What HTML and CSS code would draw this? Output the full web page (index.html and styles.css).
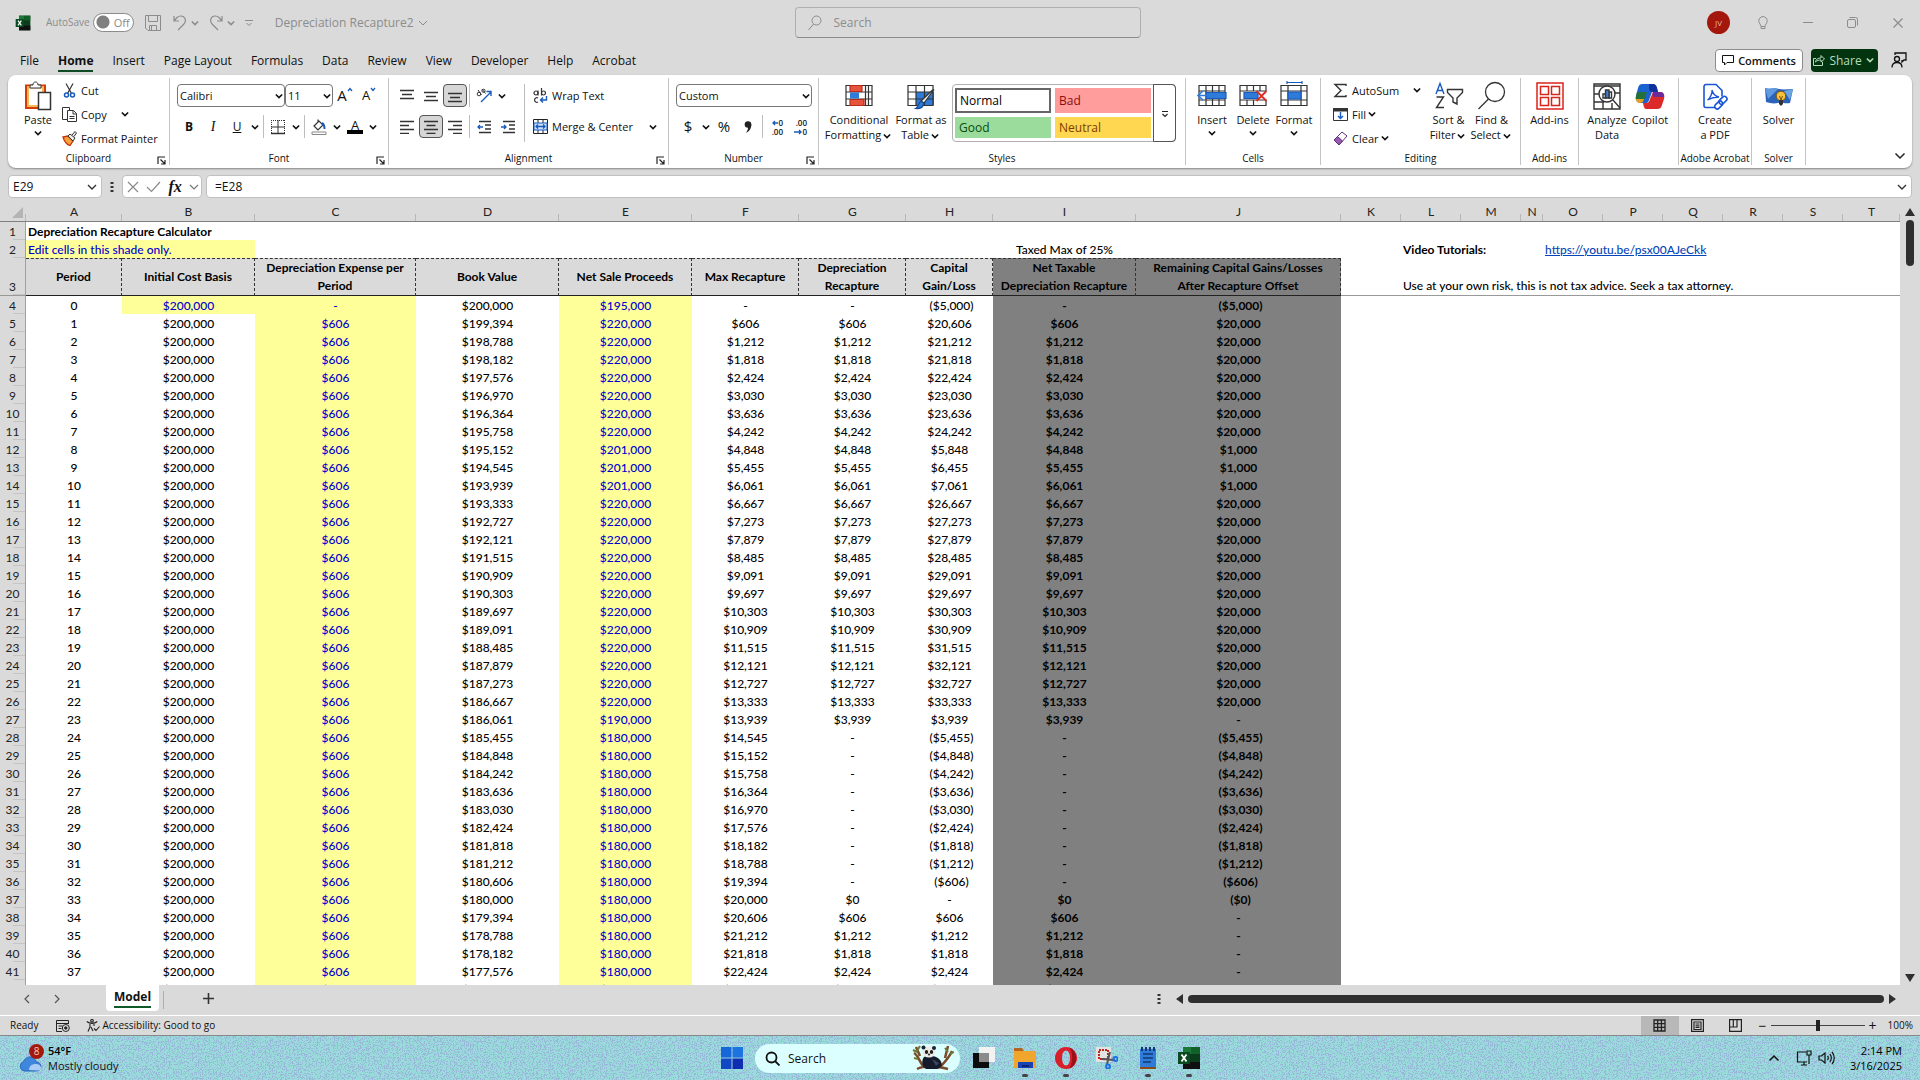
FILE: index.html
```html
<!DOCTYPE html>
<html lang="en">
<head>
    <meta charset="UTF-8">
    <meta name="viewport" content="width=device-width, initial-scale=1.0">
    <title>Depreciation Recapture2 - Excel</title>
    <link rel="stylesheet" href="styles.css">
</head>
<body>
    <!-- shared icons -->
    <svg class="sprite" aria-hidden="true">
        <symbol id="chev" viewBox="0 0 8 8"><path d="M1.5 2.8 4 5.3l2.500-2.500" fill="none" stroke="currentColor" stroke-width="1.300"/></symbol>
        <symbol id="launch" viewBox="0 0 9 9"><path d="M1 8V1h7M3.500 3.500l4 4M8 4v4H4" fill="none" stroke="#222" stroke-width="1.200"/></symbol>
        <symbol id="excel" viewBox="0 0 24 24">
            <path d="M6 1h17v22H6z" fill="#0b3d1c"/><path d="M6 1h8v7H6z" fill="#1b7a3a"/><path d="M14 1h9v7h-9z" fill="#12602a"/><path d="M6 16h17v7H6z" fill="#101010"/>
            <path d="M1 6h12v12H1z" fill="#0a4a20"/><path d="M4.500 8.500l5 7M9.500 8.500l-5 7" stroke="#fff" stroke-width="1.800"/>
        </symbol>
    </svg>

    <header class="titlebar">
        <div class="title-left">
            <svg class="logo" viewBox="0 0 24 24"><use href="#excel"/></svg>
            <label for="autosave">AutoSave</label>
            <span class="switch"><input type="checkbox" id="autosave"><span>Off</span></span>
            <button class="qat" aria-label="Save"><svg width="16" height="16" viewBox="0 0 16 16" fill="none" stroke="currentColor"><path d="M.5.5h15v15H3L.5 13zM3.500.500v6h9v-6M4.500 15.500v-5h7v5M6.500 10.500v5"/></svg></button>
            <button class="qat" aria-label="Undo"><svg width="14" height="16" viewBox="0 0 14 16" fill="none" stroke="currentColor" stroke-width="1.200"><path d="M1 1v5h5M1 6l3-3.500C6.500.200 10.500.500 12 3.500c1 2.500 0 4.500-1.500 6L5 15"/></svg></button>
            <svg class="chev" viewBox="0 0 8 8"><use href="#chev"/></svg>
            <button class="qat" aria-label="Redo"><svg width="14" height="16" viewBox="0 0 14 16" fill="none" stroke="currentColor" stroke-width="1.200"><path d="M13 1v5H8M13 6l-3-3.500C7.500.200 3.500.500 2 3.500c-1 2.500 0 4.500 1.500 6L9 15"/></svg></button>
            <svg class="chev" viewBox="0 0 8 8"><use href="#chev"/></svg>
            <button class="qat" aria-label="Customize"><svg width="8" height="8" viewBox="0 0 8 8" fill="none" stroke="currentColor"><path d="M0 1.500h8M1.500 4 4 6.500 6.500 4"/></svg></button>
            <button class="doc">Depreciation Recapture2<svg width="10" height="8" viewBox="0 0 10 8" fill="none" stroke="currentColor"><path d="M1 2l4 4 4-4"/></svg></button>
        </div>
        <div class="search">
            <svg width="14" height="16" viewBox="0 0 14 16" fill="none" stroke="currentColor"><circle cx="8.500" cy="5.500" r="4.500"/><path d="M5.500 9 .500 15"/></svg>
            <input type="search" placeholder="Search" aria-label="Search">
        </div>
        <div class="title-right">
            <button class="avatar">JV</button>
            <button class="win" aria-label="Tips"><svg width="10" height="14" viewBox="0 0 10 14" fill="none" stroke="currentColor"><path d="M3 10.500C3 8.500.800 7.500.800 4.800a4.200 4.200 0 0 1 8.400 0C9.200 7.500 7 8.500 7 10.500zM3 10.500v2h4v-2"/></svg></button>
            <button class="win" aria-label="Minimize"><svg width="10" height="10" viewBox="0 0 10 10" stroke="currentColor"><path d="M0 4.500h10"/></svg></button>
            <button class="win" aria-label="Restore"><svg width="11" height="11" viewBox="0 0 11 11" fill="none" stroke="currentColor"><rect x=".5" y="2.500" width="8" height="8" rx="1.500"/><path d="M2.500.500H8.500a2 2 0 0 1 2 2v6"/></svg></button>
            <button class="win" aria-label="Close"><svg width="10" height="10" viewBox="0 0 10 10" stroke="currentColor" stroke-width="1.200"><path d="M.5.5l9 9M9.500.500l-9 9"/></svg></button>
        </div>
    </header>

    <nav class="tabs">
        <button>File</button>
        <button class="active">Home</button>
        <button>Insert</button>
        <button>Page Layout</button>
        <button>Formulas</button>
        <button>Data</button>
        <button>Review</button>
        <button>View</button>
        <button>Developer</button>
        <button>Help</button>
        <button>Acrobat</button>
        <div class="tab-actions">
            <button class="comments"><svg width="12" height="12" viewBox="0 0 12 12" fill="none" stroke="currentColor"><path d="M.5 1.500h11v7H5L2.500 11V8.500h-2z"/></svg>Comments</button>
            <button class="share"><svg width="12" height="12" viewBox="0 0 12 12" fill="none" stroke="currentColor"><path d="M3 4.500H.5v7h9V8M2.500 8C3 5 5 4 8 4V1.500L11.500 5 8 8V6C5.500 6 4 6.500 2.500 8z"/></svg>Share<svg class="chev" viewBox="0 0 8 8"><use href="#chev"/></svg></button>
            <button class="presence" aria-label="Presence"><svg width="16" height="16" viewBox="0 0 16 16" fill="none" stroke="currentColor" stroke-width="1.300"><circle cx="6" cy="7" r="2.500"/><path d="M1 15.500c0-3.500 2-5 5-5s5 1.500 5 5M4 3V1h11v7h-2l-2 2V8"/></svg></button>
        </div>
    </nav>

    <section class="ribbon">
        <div class="group g-clipboard">
            <div class="tools">
                <button class="big">
                    <svg width="28" height="30" viewBox="0 0 28 30" fill="none"><path d="M2 4.500h19V27H2z" fill="#fff" stroke="#d83b01" stroke-width="2"/><path d="M4 6.500h15V25H4z" stroke="#f7b955" stroke-width="2"/><path d="M6 7V4h3c0-2 1-3 2.500-3S14 2 14 4h3v3z" fill="#fff" stroke="#333"/><path d="M14.500 11.500h12v17h-12z" fill="#fff" stroke="#333" stroke-width="1.500"/></svg>
                    <span>Paste</span><svg class="chev" viewBox="0 0 8 8"><use href="#chev"/></svg>
                </button>
                <div class="stack">
                    <button class="item"><svg width="15" height="15" viewBox="0 0 15 15" fill="none" stroke="#333" stroke-width="1.200"><path d="M4 .5l5.500 10M11 .5 5.500 10.500"/><g stroke="#185abd" stroke-width="1.500"><circle cx="4.500" cy="12" r="2"/><circle cx="10.500" cy="12" r="2"/></g></svg>Cut</button>
                    <button class="item"><svg width="15" height="15" viewBox="0 0 15 15" fill="#fff" stroke="#333"><path d="M.5.5h7v12h-7z"/><path d="M5.500 3.500h6l3 3v8h-9zM11 3.500V7h3.500M7.500 9.500h5M7.500 11.500h5"/></svg>Copy<svg class="chev far" viewBox="0 0 8 8"><use href="#chev"/></svg></button>
                    <button class="item"><svg width="15" height="15" viewBox="0 0 15 15"><path d="M1 6l5-1 5 5-3 4.500C5 14 2 10 1 6z" fill="#f2a33a" stroke="#c8320a" stroke-width="1.300"/><path d="M6 5l2-2 5 4-2 3zM10 4l3-3.500L14.500 2 12 5.500" fill="#eee" stroke="#333"/></svg>Format Painter</button>
                </div>
            </div>
            <div class="caption">Clipboard<svg class="launch" viewBox="0 0 9 9"><use href="#launch"/></svg></div>
        </div>

        <div class="group g-font">
            <div class="rows">
                <div class="row">
                    <div class="combo w-font"><select aria-label="Font"><option>Calibri</option></select><svg class="chev" viewBox="0 0 8 8"><use href="#chev"/></svg></div>
                    <div class="combo w-size"><select aria-label="Font size"><option>11</option></select><svg class="chev" viewBox="0 0 8 8"><use href="#chev"/></svg></div>
                    <button class="tool grow">A<svg width="6" height="5" viewBox="0 0 6 5" fill="none" stroke="#185abd" stroke-width="1.300"><path d="M1 4l2-2.500L5 4"/></svg></button>
                    <button class="tool shrink">A<svg width="6" height="5" viewBox="0 0 6 5" fill="none" stroke="#185abd" stroke-width="1.300"><path d="M1 1l2 2.500L5 1"/></svg></button>
                </div>
                <div class="row">
                    <button class="tool"><b>B</b></button>
                    <button class="tool"><i>I</i></button>
                    <button class="tool"><u>U</u></button>
                    <svg class="chev" viewBox="0 0 8 8"><use href="#chev"/></svg>
                    <span class="sep"></span>
                    <button class="tool" aria-label="Borders"><svg width="16" height="16" viewBox="0 0 16 16" fill="none" stroke="#333"><path d="M1 1.500h14M1.500 1v13M14.500 1v13" stroke-dasharray="1 1"/><path d="M8 1v14M1 8h14"/><path d="M1 14.500h14" stroke-width="1.500"/></svg></button>
                    <svg class="chev" viewBox="0 0 8 8"><use href="#chev"/></svg>
                    <span class="sep"></span>
                    <button class="tool" aria-label="Fill color"><svg width="16" height="16" viewBox="0 0 16 16" fill="none" stroke="#333" stroke-width="1.200"><path d="M3 7l5-5 4 4-5 5zM7 3V.5"/><path d="M11 4c2 1 2.500 3 2.500 6" stroke="#185abd" stroke-width="2"/><path d="M1 13h14v2.500H1z" fill="#fff" stroke="#888" stroke-width="1"/></svg></button>
                    <svg class="chev" viewBox="0 0 8 8"><use href="#chev"/></svg>
                    <button class="tool fontcolor">A</button>
                    <svg class="chev" viewBox="0 0 8 8"><use href="#chev"/></svg>
                </div>
            </div>
            <div class="caption">Font<svg class="launch" viewBox="0 0 9 9"><use href="#launch"/></svg></div>
        </div>

        <div class="group g-align">
            <div class="tools">
                <div class="rows">
                    <div class="row">
                        <button class="tool" aria-label="Top align"><svg width="14" height="14" viewBox="0 0 14 14" stroke="#333" stroke-width="1.300"><path d="M0 1.500h14M2 5.500h10M0 9.500h14"/></svg></button>
                        <button class="tool" aria-label="Middle align"><svg width="14" height="14" viewBox="0 0 14 14" stroke="#333" stroke-width="1.300"><path d="M0 3.500h14M2 7.500h10M0 11.500h14"/></svg></button>
                        <button class="tool on" aria-label="Bottom align"><svg width="14" height="14" viewBox="0 0 14 14" stroke="#333" stroke-width="1.300"><path d="M0 4.500h14M2 8.500h10M0 12.500h14"/></svg></button>
                        <span class="sep"></span>
                        <button class="tool" aria-label="Orientation"><svg width="16" height="15" viewBox="0 0 16 15" fill="none" stroke="#333"><circle cx="3" cy="6" r="1.800"/><path d="M2 2l3.500 5M6 1l3.500 4.500"/><circle cx="7.500" cy="2.800" r="1.600"/><path d="M5 14 15 4M10.500 3.500H15V8" stroke="#185abd" stroke-width="1.400"/></svg></button>
                        <svg class="chev" viewBox="0 0 8 8"><use href="#chev"/></svg>
                    </div>
                    <div class="row">
                        <button class="tool" aria-label="Align left"><svg width="14" height="14" viewBox="0 0 14 14" stroke="#333" stroke-width="1.300"><path d="M0 1.500h14M0 5.500h9M0 9.500h14M0 13.300h9"/></svg></button>
                        <button class="tool on" aria-label="Center"><svg width="14" height="14" viewBox="0 0 14 14" stroke="#333" stroke-width="1.300"><path d="M0 1.500h14M2.500 5.500h9M0 9.500h14M2.500 13.300h9"/></svg></button>
                        <button class="tool" aria-label="Align right"><svg width="14" height="14" viewBox="0 0 14 14" stroke="#333" stroke-width="1.300"><path d="M0 1.500h14M5 5.500h9M0 9.500h14M5 13.300h9"/></svg></button>
                        <span class="sep"></span>
                        <button class="tool" aria-label="Decrease indent"><svg width="14" height="14" viewBox="0 0 14 14" fill="none" stroke="#333" stroke-width="1.300"><path d="M2 1.500h12M8 5h6M8 9h6M2 12.500h12"/><path d="M6 7H1M3 5 1 7l2 2" stroke="#185abd"/></svg></button>
                        <button class="tool" aria-label="Increase indent"><svg width="14" height="14" viewBox="0 0 14 14" fill="none" stroke="#333" stroke-width="1.300"><path d="M2 1.500h12M8 5h6M8 9h6M2 12.500h12"/><path d="M0 7h5M3 5l2 2-2 2" stroke="#185abd"/></svg></button>
                    </div>
                </div>
                <span class="sep tall"></span>
                <div class="rows">
                    <button class="item row"><svg width="15" height="16" viewBox="0 0 15 16" fill="none" stroke="#333" stroke-width="1.200"><circle cx="3" cy="5" r="2"/><path d="M5 2.500v5M8.500 0v7.500"/><circle cx="10.500" cy="5" r="2"/><path d="M5 10a2.300 2.300 0 1 0 0 4"/><path d="M13.500 8v4H7.500M10 9.500 7.500 12l2.500 2.500" stroke="#185abd" stroke-width="1.400"/></svg>Wrap Text</button>
                    <button class="item row"><svg width="15" height="15" viewBox="0 0 15 15" fill="none" stroke="#222"><path d="M.5.500h14v14H.5zM5 .5V4M10 .5V4M5 11v3.500M10 11v3.500"/><path d="M1 4h13v7H1z" fill="#cfe0f7" stroke="#185abd"/><path d="M3 7.500h9M5 5.500l-2 2 2 2M10 5.500l2 2-2 2" stroke="#185abd" stroke-width="1.300"/></svg>Merge &amp; Center<svg class="chev last" viewBox="0 0 8 8"><use href="#chev"/></svg></button>
                </div>
            </div>
            <div class="caption">Alignment<svg class="launch" viewBox="0 0 9 9"><use href="#launch"/></svg></div>
        </div>

        <div class="group g-number">
            <div class="rows">
                <div class="row">
                    <div class="combo w-number"><select aria-label="Number format"><option>Custom</option></select><svg class="chev" viewBox="0 0 8 8"><use href="#chev"/></svg></div>
                </div>
                <div class="row numbers">
                    <button class="tool">$</button>
                    <svg class="chev" viewBox="0 0 8 8"><use href="#chev"/></svg>
                    <button class="tool">%</button>
                    <button class="tool" aria-label="Comma style"><svg width="8" height="12" viewBox="0 0 8 12" fill="#222"><circle cx="4" cy="3.500" r="3.300"/><path d="M7.300 3.500C7.500 7 5.500 10.500 2 11.800c1.500-2 2.300-3.800 2-6z"/></svg></button>
                    <span class="sep"></span>
                    <button class="tool decimals" aria-label="Increase decimal"><svg width="6" height="6" viewBox="0 0 6 6" fill="none" stroke="#185abd" stroke-width="1.300"><path d="M6 3H1M3 1 1 3l2 2"/></svg>0<br>.00</button>
                    <button class="tool decimals" aria-label="Decrease decimal">.00<br><svg width="8" height="6" viewBox="0 0 8 6" fill="none" stroke="#185abd" stroke-width="1.300"><path d="M0 3h7M5 1l2 2-2 2"/></svg>0</button>
                </div>
            </div>
            <div class="caption">Number<svg class="launch" viewBox="0 0 9 9"><use href="#launch"/></svg></div>
        </div>

        <div class="group g-styles">
            <div class="tools">
                <button class="big wide">
                    <svg width="28" height="30" viewBox="0 0 28 30" fill="none" stroke="#333" stroke-width="1.200"><path d="M1 4.500h26v20H1zM1 11h26M1 18h26M20.500 4.500v20M23.500 4.500v20"/><path d="M5 4.500h12v6H5zM5 18.500h14v6H5z" fill="#e5533d" stroke="#b92a18"/><path d="M5 11.500h9v6H5z" fill="#2f7bd9" stroke="none"/></svg>
                    <span>Conditional<br>Formatting <svg class="chev" viewBox="0 0 8 8"><use href="#chev"/></svg></span>
                </button>
                <button class="big wide">
                    <svg width="28" height="30" viewBox="0 0 28 30" fill="none" stroke="#333" stroke-width="1.200"><path d="M9 11h18v13H9z" fill="#2f7bd9" stroke="none"/><path d="M1 4.500h25v20H1zM1 11h25M1 18h25M9 4.500v20M17.500 4.500v20"/><path d="M27 8.500 17 22l-3-2L25 9.500z" fill="#eee"/><path d="M14 20l3 2.500c-1 4-4 5.500-8.500 5 3-1.500 2.500-5 5.500-7.500z" fill="#2f7bd9" stroke="#174e91"/></svg>
                    <span>Format as<br>Table <svg class="chev" viewBox="0 0 8 8"><use href="#chev"/></svg></span>
                </button>
                <div class="gallery">
                    <div class="swatches">
                        <button class="normal">Normal</button>
                        <button class="bad">Bad</button>
                        <button class="good">Good</button>
                        <button class="neutral">Neutral</button>
                    </div>
                    <button class="more" aria-label="More styles"><svg width="8" height="8" viewBox="0 0 8 8" fill="none" stroke="#222" stroke-width="1.200"><path d="M1 1.500h6M1.500 4 4 6.500 6.500 4"/></svg></button>
                </div>
            </div>
            <div class="caption">Styles</div>
        </div>

        <div class="group g-cells">
            <div class="tools">
                <button class="big cell">
                    <svg width="30" height="30" viewBox="0 0 30 30" fill="none" stroke="#333" stroke-width="1.200"><path d="M2 4.500h26v20H2zM2 10h26M2 19h26M9 4.500v20M15.500 4.500v20M22 4.500v20"/><path d="M9 11.500h20v6H9z" fill="#2f7bd9" stroke="#185abd"/><path d="M16 14.500H1M6 10l-5 4.500L6 19" stroke="#2f7bd9" stroke-width="1.600"/></svg>
                    <span>Insert</span><svg class="chev" viewBox="0 0 8 8"><use href="#chev"/></svg>
                </button>
                <button class="big cell">
                    <svg width="30" height="30" viewBox="0 0 30 30" fill="none" stroke="#333" stroke-width="1.200"><path d="M28 10V4.500H2V10h26M2 24.500h26V19H2zM9 4.500V10M15.500 4.500V10M22 4.500V10M9 19v5.500M15.500 19v5.500M2 10v9"/><path d="M6 11.500h14v6H6z" fill="#2f7bd9" stroke="#185abd"/><path d="M18.500 10l10 10M28.500 10l-10 10" stroke="#e02b20" stroke-width="1.800"/></svg>
                    <span>Delete</span><svg class="chev" viewBox="0 0 8 8"><use href="#chev"/></svg>
                </button>
                <button class="big cell">
                    <svg width="30" height="30" viewBox="0 0 30 30" fill="none" stroke="#333" stroke-width="1.200"><path d="M2 4.500h26v20H2zM2 10h26M2 19h26M9 4.500v20M22 4.500v20"/><path d="M9 11h13v7H9z" fill="#2f7bd9" stroke="#185abd"/><path d="M8 1.500h15M8 0v3M23 0v3" stroke="#185abd"/></svg>
                    <span>Format</span><svg class="chev" viewBox="0 0 8 8"><use href="#chev"/></svg>
                </button>
            </div>
            <div class="caption">Cells</div>
        </div>

        <div class="group g-editing">
            <div class="tools">
                <div class="stack">
                    <button class="item"><svg width="15" height="15" viewBox="0 0 15 15" fill="none" stroke="#333" stroke-width="1.400"><path d="M13 3V1.500H2l6 6-6 6h11V12"/></svg>AutoSum<svg class="chev far" viewBox="0 0 8 8"><use href="#chev"/></svg></button>
                    <button class="item"><svg width="15" height="15" viewBox="0 0 15 15" fill="none" stroke="#333"><path d="M.5 1.500h14v12H.5z"/><path d="M.5 1.500h14V4H.5z" fill="#333"/><path d="M7.500 5v6M5 9l2.500 2.500L10 9" stroke="#185abd" stroke-width="1.400"/></svg>Fill<svg class="chev near" viewBox="0 0 8 8"><use href="#chev"/></svg></button>
                    <button class="item"><svg width="15" height="15" viewBox="0 0 15 15" stroke="#5c2d7a"><path d="M1 9 9 1l5 4-8 9z" fill="#fff"/><path d="M1 9l3.500-3.500 5 4.500L6 14z" fill="#9b59b6"/></svg>Clear<svg class="chev near" viewBox="0 0 8 8"><use href="#chev"/></svg></button>
                </div>
                <button class="big edit">
                    <svg width="30" height="30" viewBox="0 0 30 30" fill="none" stroke-width="1.400"><path d="M2 13 6 2.500 10 13M3.500 9.500h5" stroke="#185abd"/><path d="M2.500 16h7l-7 10.500h7.500M13.500 8.500h15v3L23 17v6l-4-2v-4l-5.500-5.500z" stroke="#333"/></svg>
                    <span>Sort &amp;<br>Filter <svg class="chev" viewBox="0 0 8 8"><use href="#chev"/></svg></span>
                </button>
                <button class="big edit">
                    <svg width="30" height="30" viewBox="0 0 30 30" fill="none" stroke="#333" stroke-width="1.300"><circle cx="18" cy="11" r="9.500"/><path d="M11.500 18 1.500 28"/></svg>
                    <span>Find &amp;<br>Select <svg class="chev" viewBox="0 0 8 8"><use href="#chev"/></svg></span>
                </button>
            </div>
            <div class="caption">Editing</div>
        </div>

        <div class="group g-addins">
            <div class="tools">
                <button class="big">
                    <svg width="28" height="30" viewBox="0 0 28 30" fill="#fff" stroke="#d9241a" stroke-width="1.500"><path d="M1 2h26v26H1z"/><path d="M4.500 5.500h8v8h-8zM15.500 5.500h8v8h-8zM4.500 16.500h8v8h-8zM15.500 16.500h8v8h-8z"/></svg>
                    <span>Add-ins</span>
                </button>
            </div>
            <div class="caption">Add-ins</div>
        </div>

        <div class="group g-analyze">
            <div class="tools">
                <button class="big">
                    <svg width="28" height="30" viewBox="0 0 28 30" fill="none" stroke="#333" stroke-width="1.400"><path d="M1 3h26v25H1zM1 5h26M1 13h6M1 21h10M10 21v7M19 22v6M22 12h5"/><circle cx="14" cy="13" r="8" fill="#fff"/><path d="M10 13h2.500v4H10zM16 11h2.500v6H16z"/><path d="M12.500 9H16v8h-3.500z" fill="#3b7dd8"/><path d="M20 19l7 8"/></svg>
                    <span>Analyze<br>Data</span>
                </button>
                <button class="big">
                    <svg width="30" height="30" viewBox="0 0 30 30"><path d="M7 3h11c2 0 3 1 4 4l1 4h-6l-3 8c-1 3-2 3-4 3H6c-4 0-6-3-5-7L3 7c1-3 2-4 4-4z" fill="#1a62d0"/><path d="M14 3h4c2 0 3 1 4 4l1 4h-6c-2 0-3-2-3-4z" fill="#10309c"/><path d="M2 11h10l-3 8H1c-.500-2 0-4 1-8z" fill="#23703a"/><path d="M1 18h8c-1 3-2 4-4 4-3 0-4-2-4-4z" fill="#e8a020"/><path d="M18 11h7c4 0 5 3 4 7l-2 6c-1 3-2 4-5 4H12c-3 0-3-2-4-6h3c2 0 3-1 4-4z" fill="#dc2a2a"/><path d="M18 11h7c3 0 4 2 4 5h-9c-2 0-3-2-2-5z" fill="#6b2a9a"/></svg>
                    <span>Copilot</span>
                </button>
            </div>
        </div>

        <div class="group g-adobe">
            <div class="tools">
                <button class="big">
                    <svg width="28" height="30" viewBox="0 0 28 30" fill="none" stroke="#1a56d6" stroke-width="1.600"><path d="M14 26.500H5a2 2 0 0 1-2-2v-19a2 2 0 0 1 2-2h10l6 6v6"/><path d="M6.500 19c3-2 5-7 4.500-10 1 4 3 6.500 7 7-4 0-8 1-11.500 3z" stroke-width="1.300"/><rect x="13" y="22" width="9" height="5" rx="2.500" transform="rotate(-45 17 24)"/><rect x="18" y="17" width="9" height="5" rx="2.500" transform="rotate(-45 22 20)"/></svg>
                    <span>Create<br>a PDF</span>
                </button>
            </div>
            <div class="caption">Adobe Acrobat</div>
        </div>

        <div class="group g-solver">
            <div class="tools">
                <button class="big">
                    <svg width="30" height="30" viewBox="0 0 30 30"><path d="M1 7c5 2 9-1 14 1 5 1 9 0 14 0l-3 14c-5 1-8-1-12 0-5 1-8 0-12-1z" fill="#2a63b8"/><path d="M1 7c5 2 8-1 13 1L4 18z" fill="#5f9ae0"/><path d="M20 10l9-2-3 11z" fill="#6ba4e2"/><circle cx="17" cy="15" r="4.800" fill="#f7c23c" stroke="#7a5410"/><path d="M15 19h4v4l-2 2-2-2z" fill="#333"/><path d="M15.500 15l1.500 4 1.500-4" fill="none" stroke="#7a5410"/></svg>
                    <span>Solver</span>
                </button>
            </div>
            <div class="caption">Solver</div>
        </div>

        <button class="collapse" aria-label="Collapse ribbon"><svg width="12" height="8" viewBox="0 0 12 8" fill="none" stroke="#222" stroke-width="1.500"><path d="M1.500 1.500 6 6l4.500-4.500"/></svg></button>
    </section>

    <div class="formulabar">
        <div class="namebox"><input type="text" value="E29" aria-label="Name box"><svg width="10" height="8" viewBox="0 0 10 8" fill="none" stroke="#333" stroke-width="1.400"><path d="M1 2l4 4 4-4"/></svg></div>
        <svg width="4" height="12" viewBox="0 0 4 12" fill="#333"><path d="M.5 1h3v2h-3zM.5 5h3v2h-3zM.5 9h3v2h-3z"/></svg>
        <div class="fxbox">
            <button aria-label="Cancel"><svg width="12" height="12" viewBox="0 0 12 12" stroke="#8a8a8a" stroke-width="1.200"><path d="M1 1l10 10M11 1 1 11"/></svg></button>
            <button aria-label="Enter"><svg width="15" height="12" viewBox="0 0 15 12" fill="none" stroke="#8a8a8a" stroke-width="1.200"><path d="M1 6l4.500 4.500L14 1"/></svg></button>
            <button class="fx">fx</button>
            <svg width="10" height="8" viewBox="0 0 10 8" fill="none" stroke="#777" stroke-width="1.200"><path d="M1 2l4 4 4-4"/></svg>
        </div>
        <div class="formula"><input type="text" value="=E28" aria-label="Formula"><svg width="10" height="8" viewBox="0 0 10 8" fill="none" stroke="#333" stroke-width="1.400"><path d="M1 2l4 4 4-4"/></svg></div>
    </div>

    <main class="sheet">
        <div class="grid">
            <table>
                <colgroup>
                    <col class="c-head"><col class="c-a"><col class="c-b"><col class="c-c"><col class="c-d"><col class="c-e"><col class="c-f"><col class="c-g"><col class="c-h"><col class="c-i"><col class="c-j"><col class="c-std"><col class="c-std"><col class="c-std"><col class="c-n"><col class="c-std"><col class="c-std"><col class="c-std"><col class="c-std"><col class="c-std"><col>
                </colgroup>
                <thead>
                    <tr>
                        <th class="corner"><svg width="11" height="11" viewBox="0 0 11 11"><path d="M11 0v11H0z" fill="#b4b4b4"/></svg></th>
                        <th>A</th><th>B</th><th>C</th><th>D</th><th>E</th><th>F</th><th>G</th><th>H</th><th>I</th><th>J</th><th>K</th><th>L</th><th>M</th><th>N</th><th>O</th><th>P</th><th>Q</th><th>R</th><th>S</th><th>T</th>
                    </tr>
                </thead>
                <tbody id="cells">
                    <tr><th>1</th><td colspan="20" class="left"><b>Depreciation Recapture Calculator</b></td></tr>
                    <tr>
                        <th>2</th><td colspan="2" class="left input">Edit cells in this shade only.</td>
                        <td></td><td></td><td></td><td></td><td></td><td></td><td>Taxed Max of 25%</td><td></td><td></td>
                        <td colspan="3" class="left"><b>Video Tutorials:</b></td>
                        <td colspan="6" class="left"><a href="https://youtu.be/psx00AJeCkk">https://youtu.be/psx00AJeCkk</a></td>
                    </tr>
                    <tr class="labels">
                        <th>3</th><td>Period</td><td>Initial Cost Basis</td><td>Depreciation Expense per<br>Period</td><td>Book Value</td><td>Net Sale Proceeds</td><td>Max Recapture</td><td>Depreciation<br>Recapture</td><td>Capital<br>Gain/Loss</td><td class="dark">Net Taxable<br>Depreciation Recapture</td><td class="dark">Remaining Capital Gains/Losses<br>After Recapture Offset</td>
                        <td class="plain"></td><td colspan="9" class="plain left">Use at your own risk, this is not tax advice. Seek a tax attorney.</td>
                    </tr>
                </tbody>
            </table>
        </div>
        <div class="vscroll">
            <svg width="10" height="8" viewBox="0 0 10 8"><path d="M5 0l5 8H0z" fill="#2f2f2f"/></svg>
            <span class="thumb"></span>
            <svg class="down" width="10" height="8" viewBox="0 0 10 8"><path d="M5 8l5-8H0z" fill="#2f2f2f"/></svg>
        </div>
    </main>

    <div class="sheettabs">
        <button aria-label="Previous sheet"><svg width="6" height="10" viewBox="0 0 6 10" fill="none" stroke="#555" stroke-width="1.200"><path d="M5 1 1 5l4 4"/></svg></button>
        <button aria-label="Next sheet"><svg width="6" height="10" viewBox="0 0 6 10" fill="none" stroke="#555" stroke-width="1.200"><path d="M1 1l4 4-4 4"/></svg></button>
        <button class="current"><span>Model</span></button>
        <span class="tabsep"></span>
        <button class="add" aria-label="New sheet"><svg width="11" height="11" viewBox="0 0 11 11" stroke="#333" stroke-width="1.600"><path d="M5.500 0v11M0 5.500h11"/></svg></button>
        <div class="hscroll">
            <svg width="4" height="12" viewBox="0 0 4 12" fill="#333"><path d="M.5 1h3v2h-3zM.5 5h3v2h-3zM.5 9h3v2h-3z"/></svg>
            <svg class="arrow-left" width="7" height="10" viewBox="0 0 7 10"><path d="M7 0v10L0 5z" fill="#2f2f2f"/></svg>
            <span class="thumb"></span>
            <svg width="7" height="10" viewBox="0 0 7 10"><path d="M0 0v10l7-5z" fill="#2f2f2f"/></svg>
        </div>
    </div>

    <footer class="statusbar">
        <span>Ready</span>
        <svg class="macro" width="14" height="12" viewBox="0 0 14 12" fill="none" stroke="#222"><path d="M6 11.500H.5V.500h12V4M.5 3.500h12M2.500 6h4M2.500 8.500h3"/><circle cx="9.800" cy="8" r="3.500"/><circle cx="9.800" cy="8" r="1.200" fill="#222"/></svg>
        <button class="access"><svg width="14" height="13" viewBox="0 0 14 13" fill="none" stroke="#222" stroke-width="1.100"><circle cx="6" cy="1.800" r="1.300"/><path d="M.8 2.500c3 2.500 7.500 2.500 10.500 0M4 4v4l-2 4.500M8 4v3M5 8l2 4M8 9.500l2 2 3.500-4"/></svg>Accessibility: Good to go</button>
        <div class="views">
            <button class="on" aria-label="Normal view"><svg width="13" height="13" viewBox="0 0 13 13" fill="none" stroke="#222" stroke-width="1.300"><path d="M1 1h11v11H1zM1 4.700h11M1 8.400h11M4.700 1v11M8.400 1v11"/></svg></button>
            <button aria-label="Page layout view"><svg width="13" height="13" viewBox="0 0 13 13" fill="none" stroke="#222" stroke-width="1.200"><path d="M.6.600h11.800v11.800H.6zM3 3h7v7.500H3zM4.500 5h4M4.500 6.800h4M4.500 8.500h4"/></svg></button>
            <button aria-label="Page break view"><svg width="13" height="13" viewBox="0 0 13 13" fill="none" stroke="#222" stroke-width="1.200"><path d="M.6.600h11.800v11.800H.6zM.6 8h7.400V.6M4.300.6V8"/></svg></button>
            <button class="zoom-btn">−</button>
            <input type="range" min="10" max="190" value="100" aria-label="Zoom">
            <button class="zoom-btn">+</button>
            <span class="percent">100%</span>
        </div>
    </footer>

    <div class="taskbar">
        <svg class="grain" aria-hidden="true">
            <filter id="dither" x="0" y="0" width="100%" height="100%" color-interpolation-filters="sRGB">
                <feTurbulence type="fractalNoise" baseFrequency="0.75" numOctaves="2" seed="4"/>
                <feColorMatrix values="0 0 0 0 .6  1 0 0 0 0  0 0 0 0 .86  0 0 0 0 1"/>
                <feComponentTransfer><feFuncG type="discrete" tableValues=".72 .72 .72 .72 .72 .72 .72 .72 .72 .86 .86 .86 .86 .86 .86 .86 .86 .86 .86 .86"/></feComponentTransfer>
            </filter>
            <rect width="100%" height="100%" filter="url(#dither)"/>
        </svg>
        <button class="weather">
            <span class="cloud">
                <svg width="24" height="16" viewBox="0 0 24 16"><path d="M6 15a5 5 0 0 1-.5-9.500C7 2 10 .5 13 1c3 .5 4.500 2.500 5 5 3 0 5 2 5 4.500S21 15 18 15z" fill="#3f86dd" stroke="#2a66bd"/><path d="M11 14c0-4 3-6 6.500-6 3 0 5.500 1.500 5.500 4 0 1.500-1 2.500-3 2.500z" fill="#a9cdf5"/></svg>
                <span class="badge">8</span>
            </span>
            <span class="forecast"><span>54°F</span><span>Mostly cloudy</span></span>
        </button>
        <div class="apps">
            <button aria-label="Start"><svg width="22" height="22" viewBox="0 0 22 22"><path d="M0 0h10.500v10.500H0z" fill="#1668d8"/><path d="M11.500 0H22v10.500H11.500z" fill="#1c74e0"/><path d="M0 11.500h10.500V22H0z" fill="#1147c4"/><path d="M11.500 11.500H22V22H11.500z" fill="#0f2db0"/></svg></button>
            <div class="find">
                <svg width="15" height="15" viewBox="0 0 15 15" fill="none" stroke="#111" stroke-width="1.800"><circle cx="6.500" cy="6.500" r="5"/><path d="M10 10l4.500 4.500"/></svg>
                <input type="search" placeholder="Search" aria-label="Search Windows">
                <svg width="42" height="26" viewBox="0 0 42 26"><path d="M2 8c4 2 5 8 9 13M40 6c-3 7-7 11-12 16M5 24c8-4 22-2 31 0M4 2l4 9M36 1l-3 12" stroke="#7a4a26" stroke-width="2.500" fill="none"/><path d="M1 5l4 2M8 1l-3 5M38 9l4-2M33 3l3 4M2 13l4 1" stroke="#6d7a3a" stroke-width="2"/><path d="M12 12c4-2 12-2 16 3 3 4 2 8-3 9H14c-4-2-5-8-2-12z" fill="#151b2a"/><path d="M20 14l7 4-3 3z" fill="#3a4560"/><ellipse cx="17" cy="7" rx="6.500" ry="5.500" fill="#eceae4"/><circle cx="11.500" cy="2.500" r="2" fill="#1b2233"/><circle cx="22" cy="3" r="2" fill="#1b2233"/><ellipse cx="14.500" cy="7" rx="1.700" ry="2" fill="#222"/><ellipse cx="19.500" cy="7" rx="1.700" ry="2" fill="#222"/><circle cx="17" cy="9.500" r="1" fill="#222"/></svg>
            </div>
            <button aria-label="Task view"><svg width="22" height="22" viewBox="0 0 22 22"><path d="M6 0h16v15H6z" fill="#f2f2f2"/><path d="M0 6h16v15H0z" fill="#0c0c0c"/><path d="M6 6h10v9H6z" fill="#8b8b8b"/></svg></button>
            <button class="open" aria-label="File Explorer"><svg width="22" height="22" viewBox="0 0 22 22"><path d="M0 1h8l2 3v3H0z" fill="#b5651d"/><path d="M0 4h22v17H0z" fill="#f0a52c"/><path d="M4 15h15v6H4z" fill="#1742b8"/><path d="M8 18h7v2H8z" fill="#0b2370"/></svg></button>
            <button class="open" aria-label="Opera"><svg width="22" height="22" viewBox="0 0 22 22"><path fill-rule="evenodd" d="M11 0a11 11 0 1 0 0 22 11 11 0 0 0 0-22zm0 3.500c2.500 0 4 3.500 4 7.500s-1.500 7.500-4 7.500S7 15 7 11s1.500-7.500 4-7.500z" fill="#d8202a"/><path d="M14 .5c9 2.500 10 18 0 21 4-3 4.500-18 0-21z" fill="#9c1018"/></svg></button>
            <button aria-label="Snipping Tool"><svg width="22" height="22" viewBox="0 0 22 22" fill="none"><path d="M0 0h15v15H0z" fill="#e3e3e3"/><path d="M3 3h9v9H3z" stroke="#c0261c" stroke-width="2" stroke-dasharray="2 1"/><path d="M14 5l-3 12M6 12l13 1" stroke="#555" stroke-width="2"/><circle cx="12" cy="19.500" r="2" stroke="#1a73e0" stroke-width="2"/><circle cx="19.500" cy="12" r="2" stroke="#1a73e0" stroke-width="2"/></svg></button>
            <button class="open" aria-label="Notepad"><svg width="22" height="22" viewBox="0 0 22 22"><path d="M3 2h16v18H3z" fill="#2f7bd9"/><path d="M5 0v4M9 0v4M13 0v4M17 0v4" stroke="#123a72" stroke-width="2"/><path d="M6 7h10M6 11h10M6 15h8" stroke="#123a72" stroke-width="1.600"/><path d="M3 20h16v2H3z" fill="#8a4a1c"/></svg></button>
            <button class="open" aria-label="Excel"><svg width="24" height="24" viewBox="0 0 24 24"><use href="#excel"/></svg></button>
        </div>
        <div class="tray">
            <svg width="12" height="8" viewBox="0 0 12 8" fill="none" stroke="#111" stroke-width="1.500"><path d="M1.500 6.500 6 2l4.500 4.500"/></svg>
            <svg class="net" width="16" height="16" viewBox="0 0 16 16" fill="none" stroke="#111" stroke-width="1.200"><path d="M10 2H1.500v10H11M5 15h6M8 12v3M11 1h4v4h-4zM13 5v9"/></svg>
            <svg width="17" height="14" viewBox="0 0 17 14" fill="none" stroke="#111" stroke-width="1.200"><path d="M1 5h2.500L7 2v10L3.500 9H1zM9.500 5c1 1 1 3 0 4M11.800 3c2 2 2 6 0 8M14 1c3 3 3 9 0 12"/></svg>
            <div class="clock"><span>2:14 PM</span><span>3/16/2025</span></div>
        </div>
    </div>

    <script src="script.js"></script>
</body>
</html>
```
FILE: styles.css
```css
* {
    box-sizing: border-box;
}
body {
    margin: 0;
    height: 100vh;
    display: flex;
    flex-direction: column;
    overflow: hidden;
    background: #dadada;
    color: #111;
    font-family: "Open Sans", "Noto Sans", sans-serif;
    font-size: 11px;
    line-height: 15px;
}
button, input, select {
    font: inherit;
    color: inherit;
    background: none;
    border: 0;
    padding: 0;
    margin: 0;
    outline: none;
}
svg {
    flex: none;
}
.sprite {
    position: absolute;
    width: 0;
    height: 0;
}
.chev {
    width: 12px;
    height: 12px;
    padding: 1px;
}

/* title bar */
.titlebar {
    height: 45px;
    padding: 0 0 0 15px;
    display: grid;
    grid-template-columns: 1fr 346px 1fr;
    align-items: center;
    color: #8c8c8c;
}
.title-left, .title-right {
    display: flex;
    align-items: center;
}
.title-left label {
    font-size: 10px;
}
.logo {
    width: 16px;
    height: 16px;
    margin-right: 15px;
}
.switch {
    position: relative;
    margin: 0 11px 0 3px;
    width: 41px;
    height: 19px;
    display: flex;
}
.switch input {
    appearance: none;
    width: 41px;
    height: 19px;
    border: 1px solid #8c8c8c;
    border-radius: 10px;
    background: radial-gradient(circle at 9px 8px, #808080 6px, #fff 7px);
}
.switch span {
    position: absolute;
    left: 21px;
    top: 2px;
}
.qat {
    display: flex;
    margin-right: 2px;
}
.qat + .qat {
    margin-left: 10px;
}
.title-left .chev {
    margin: 0 8px 0 0;
}
.doc {
    margin-left: 20px;
    display: flex;
    align-items: center;
    gap: 4px;
    font-size: 12px;
}
.search {
    height: 31px;
    border: 1px solid #b0b0b0;
    border-bottom-color: #8c8c8c;
    border-radius: 4px;
    display: flex;
    align-items: center;
    gap: 12px;
    padding: 0 12px;
    font-size: 12px;
}
.search input {
    flex: 1;
    min-width: 0;
}
::placeholder {
    color: inherit;
    opacity: 1;
}
.title-right {
    justify-content: flex-end;
}
.avatar {
    width: 23px;
    height: 23px;
    border-radius: 50%;
    background: #a3170c;
    color: #f2b5a8;
    font-size: 8px;
    margin-right: 10px;
}
.win {
    width: 45px;
    display: flex;
    justify-content: center;
}

/* ribbon tabs */
.tabs {
    height: 30px;
    padding: 0 13px 0 20px;
    display: flex;
    align-items: center;
    gap: 19px;
    font-size: 12px;
    font-weight: 500;
}
.tabs > button {
    height: 24px;
    padding-top: 2px;
    border-bottom: 2px solid transparent;
}
.tabs > .active {
    border-color: #0e4a24;
    font-weight: 700;
}
.tab-actions {
    margin-left: auto;
    display: flex;
    align-items: center;
    gap: 8px;
}
.comments, .share {
    height: 23px;
    border-radius: 4px;
    display: flex;
    align-items: center;
    justify-content: center;
    gap: 4px;
}
.comments {
    width: 88px;
    background: #fff;
    border: 1px solid #8c8c8c;
    font-size: 11px;
    font-weight: 600;
}
.share {
    width: 67px;
    background: #02350f;
    color: #b5dcbc;
    margin-right: 5px;
}
.share .chev {
    margin-left: -2px;
}
.presence {
    display: flex;
}

/* ribbon */
.ribbon {
    margin: 0 8px;
    height: 93px;
    display: flex;
    background: #fff;
    border-radius: 8px;
    box-shadow: 0 1px 2px #888;
    padding: 3px 0;
}
.group {
    border-right: 1px solid #c4c4c4;
    display: flex;
    flex-direction: column;
    justify-content: space-between;
    position: relative;
    white-space: nowrap;
}
.g-clipboard { width: 162px; }
.g-font { width: 219px; }
.g-align { width: 280px; }
.g-number { width: 150px; }
.g-styles { width: 367px; }
.g-cells { width: 135px; }
.g-editing { width: 200px; }
.g-addins { width: 58px; }
.g-analyze { width: 100px; }
.g-adobe { width: 73px; }
.g-solver { width: 54px; }
.caption {
    text-align: center;
    font-size: 10px;
    height: 13px;
    line-height: 13px;
}
.launch {
    position: absolute;
    right: 3px;
    bottom: 0;
    width: 9px;
    height: 9px;
}
.tools {
    display: flex;
}
.group > .tools {
    justify-content: center;
}
.big {
    display: flex;
    flex-direction: column;
    align-items: center;
    min-width: 42px;
    padding-top: 3px;
}
.big > span {
    margin-top: 1px;
}
.big span .chev {
    margin-left: -3px;
    vertical-align: middle;
}
.g-clipboard > .tools {
    justify-content: flex-start;
    padding-left: 9px;
    gap: 3px;
}
.stack {
    display: flex;
    flex-direction: column;
}
.item {
    display: flex;
    align-items: center;
    gap: 4px;
    height: 24px;
}
.far {
    margin-left: 8px;
}
.near {
    margin-left: -4px;
}
.rows {
    display: flex;
    flex-direction: column;
    gap: 4px;
    padding-top: 4px;
}
.row {
    display: flex;
    align-items: center;
    height: 27px;
}
.tool {
    width: 24px;
    height: 23px;
    display: flex;
    align-items: center;
    justify-content: center;
    font-size: 12px;
}
.tool i {
    font-family: "Liberation Serif", serif;
    font-size: 14px;
}
.tool.on {
    background: #d6d6d6;
    border: 1px solid #555;
    border-radius: 4px;
}
.sep {
    width: 1px;
    height: 23px;
    margin: 0 2px;
    background: #bdbdbd;
}
.sep.tall {
    height: 58px;
    margin: 6px 8px 0 4px;
}
.g-font .rows {
    padding-left: 7px;
}
.combo {
    position: relative;
}
.combo select {
    appearance: none;
    width: 100%;
    height: 23px;
    border: 1px solid #777;
    border-radius: 4px;
    padding: 0 2px;
    background: #fff;
}
.combo .chev {
    position: absolute;
    right: 0;
    top: 6px;
}
.w-font { width: 108px; }
.w-size { width: 48px; }
.w-number { width: 136px; }
.grow, .shrink {
    align-items: flex-start;
    font-size: 15px;
    line-height: 22px;
}
.shrink {
    font-size: 13px;
}
.grow svg, .shrink svg {
    margin-top: 3px;
}
.fontcolor {
    height: 15px;
    line-height: 12px;
    font-size: 13px;
    width: 16px;
    margin: 0 4px;
    border-bottom: 4px solid #000;
}
.g-align > .tools {
    justify-content: flex-start;
    padding-left: 6px;
}
.g-align .item {
    height: 27px;
}
.last {
    margin-left: 10px;
}
.g-number .rows {
    padding-left: 7px;
}
.numbers .tool {
    font-size: 15px;
}
.numbers .decimals {
    display: block;
    font-size: 8px;
    line-height: 9px;
    text-align: right;
    padding-right: 6px;
    font-weight: 600;
}
.g-styles > .tools {
    justify-content: flex-start;
    padding-left: 9px;
}
.wide {
    width: 62px;
}
.gallery {
    margin: 6px 0 0;
    width: 224px;
    height: 58px;
    display: flex;
    border: 1px solid #b0b0b0;
    border-radius: 4px;
}
.swatches {
    flex: 1;
    display: grid;
    grid-template-columns: 1fr 1fr;
    gap: 4px;
    padding: 3px 3px 3px 2px;
    font-size: 12px;
}
.swatches button {
    text-align: left;
    padding-left: 4px;
}
.swatches .normal {
    border: 2px solid #666;
    padding-left: 3px;
    color: #000;
}
.bad {
    background: #ff9c9c;
    color: #8c0b0b;
}
.good {
    background: #9bdb9b;
    color: #064f0e;
}
.neutral {
    background: #ffd750;
    color: #7a3d00;
}
.more {
    width: 23px;
    margin: -1px;
    border: 1px solid #555;
    border-radius: 0 4px 4px 0;
}
.cell {
    width: 41px;
    min-width: 0;
}
.g-editing > .tools {
    justify-content: flex-start;
    padding-left: 12px;
}
.g-editing .stack {
    width: 94px;
}
.edit {
    width: 43px;
}
.g-analyze .big {
    width: 43px;
}
.collapse {
    margin: auto 6px 2px auto;
}

/* formula bar */
.formulabar {
    margin: 7px 8px 4px;
    display: flex;
    align-items: center;
    gap: 8px;
    height: 23px;
    font-size: 12px;
}
.namebox, .fxbox, .formula {
    height: 23px;
    background: #fff;
    border: 1px solid #c0c0c0;
    border-radius: 4px;
    display: flex;
    align-items: center;
    padding: 0 4px;
}
.namebox {
    width: 94px;
}
.namebox input, .formula input {
    flex: 1;
    min-width: 0;
}
.fxbox {
    width: 80px;
    padding-right: 2px;
    justify-content: space-between;
}
.fxbox button {
    display: flex;
}
.fxbox .fx {
    font: italic bold 16px "Liberation Serif", serif;
    line-height: 18px;
}
.formula {
    flex: 1;
    margin-left: -4px;
    padding-left: 8px;
}

/* sheet */
.sheet {
    flex: 1;
    min-height: 0;
    display: flex;
}
.grid {
    flex: 1;
    min-width: 0;
    overflow: hidden;
    background: #fff;
}
table {
    table-layout: fixed;
    width: 100%;
    border-collapse: separate;
    border-spacing: 0;
    font-family: Lato, Carlito, sans-serif;
    font-size: 12px;
    font-weight: 500;
    line-height: 17px;
    color: #000;
}
.c-head { width: 26px; }
.c-a { width: 96px; }
.c-b { width: 133px; }
.c-c { width: 161px; }
.c-d { width: 143px; }
.c-e { width: 133px; }
.c-f, .c-g { width: 107px; }
.c-h { width: 87px; }
.c-i { width: 143px; }
.c-j { width: 205px; }
.c-std { width: 60px; }
.c-n { width: 22px; }
th, td {
    padding: 1px 0 0;
    height: 18px;
    text-align: center;
    white-space: nowrap;
}
thead th {
    height: 20px;
    line-height: 18px;
    font-weight: 400;
    color: #222;
    background: linear-gradient(#b8b8b8, #b8b8b8) right 12px / 1px 8px no-repeat #dadada;
    border-bottom: 1px solid #808080;
}
thead .corner {
    text-align: right;
    padding-right: 3px;
}
.corner svg {
    vertical-align: middle;
}
tbody th {
    font-weight: 400;
    color: #222;
    background: linear-gradient(#c4c4c4, #c4c4c4) right bottom / 12px 1px no-repeat #dadada;
    border-right: 1px solid #a0a0a0;
}
td.left {
    text-align: left;
    padding-left: 2px;
}
td.input {
    background: #ffff99;
    color: #0000d0;
}
td.dark {
    background: #808080;
    font-weight: 700;
}
td.neg {
    padding-left: 4px;
}
.labels td, .labels th {
    height: 38px;
    border-bottom: 1px solid #222;
}
.labels th {
    vertical-align: bottom;
    border-bottom-color: #999;
}
.labels td {
    font-weight: 700;
    line-height: 18px;
    padding: 0;
    background: #dadada;
    border-top: 1px dashed #333;
    border-right: 1px dashed #333;
}
.labels td.dark {
    background: #808080;
}
.labels td.plain {
    background: #fff;
    border-top: 0;
    border-right: 0;
    border-bottom-color: #999;
    font-weight: 500;
    vertical-align: bottom;
}
.labels td.left {
    padding-left: 2px;
}
td a {
    color: #0645b8;
}
.vscroll {
    width: 20px;
    display: flex;
    flex-direction: column;
    align-items: center;
    padding: 6px 0 3px;
    gap: 4px;
}
.vscroll .thumb {
    width: 8px;
    height: 46px;
    border-radius: 4px;
    background: #2f2f2f;
}
.vscroll .down {
    margin-top: auto;
}

/* sheet tabs */
.sheettabs {
    height: 31px;
    display: flex;
    align-items: flex-start;
    border-bottom: 1px solid #fff;
    padding-left: 12px;
}
.sheettabs button {
    width: 30px;
    height: 28px;
}
.sheettabs .current {
    width: 53px;
    height: 26px;
    margin-left: 34px;
    background: #fff;
    border-radius: 0 0 4px 4px;
    font-size: 12px;
    font-weight: 700;
}
.current span {
    display: inline-block;
    border-bottom: 2px solid #0e5a28;
    line-height: 18px;
}
.tabsep {
    width: 1px;
    height: 18px;
    margin: 6px 0 0 4px;
    background: #b0b0b0;
}
.sheettabs .add {
    margin-left: 29px;
}
.hscroll {
    margin-left: auto;
    width: 40%;
    height: 28px;
    display: flex;
    align-items: center;
    gap: 5px;
    padding-right: 24px;
}
.hscroll .thumb {
    flex: 1;
    height: 8px;
    border-radius: 4px;
    background: #2f2f2f;
}
.arrow-left {
    margin-left: 10px;
}

/* status bar */
.statusbar {
    height: 19px;
    display: flex;
    align-items: center;
    padding: 0 7px 0 10px;
    font-size: 10px;
}
.macro {
    margin: 0 16px 0 18px;
}
.access {
    display: flex;
    align-items: center;
    gap: 2px;
}
.views {
    margin-left: auto;
    display: flex;
    align-items: center;
}
.views button {
    width: 38px;
    height: 19px;
    display: flex;
    align-items: center;
    justify-content: center;
}
.views .on {
    background: #b8b8b8;
}
.views .zoom-btn {
    width: 16px;
    font-size: 14px;
}
.views input {
    appearance: none;
    width: 94px;
    height: 12px;
    background: linear-gradient(#444, #444) center / 100% 1px no-repeat;
}
.views input::-webkit-slider-thumb {
    appearance: none;
    width: 4px;
    height: 11px;
    background: #222;
}
.percent {
    margin-left: 7px;
}

/* taskbar */
.taskbar {
    position: relative;
    height: 45px;
    display: grid;
    grid-template-columns: 1fr auto 1fr;
    align-items: center;
    background: #9bccdc;
    border-top: 1px solid #888;
}
.grain {
    position: absolute;
    inset: 0;
    width: 100%;
    height: 100%;
}
.weather, .apps, .tray {
    position: relative;
    display: flex;
    align-items: center;
}
.weather {
    padding-left: 18px;
    gap: 6px;
    text-align: left;
}
.cloud {
    position: relative;
    height: 28px;
    display: flex;
    align-items: flex-end;
}
.badge {
    position: absolute;
    right: -2px;
    top: 0;
    width: 15px;
    height: 15px;
    border-radius: 50%;
    background: #a3170c;
    color: #f6c9bd;
    font-size: 10px;
    text-align: center;
}
.forecast, .clock {
    display: flex;
    flex-direction: column;
    line-height: 15px;
}
.forecast span:first-child {
    font-weight: 600;
    color: #000;
}
.apps button {
    position: relative;
    width: 41px;
    height: 40px;
    display: flex;
    align-items: center;
    justify-content: center;
}
.apps .open::after {
    content: "";
    position: absolute;
    bottom: 1px;
    width: 6px;
    height: 3px;
    border-radius: 2px;
    background: #444;
}
.find {
    width: 205px;
    height: 29px;
    margin: 0 3px;
    padding: 0 6px 0 10px;
    border-radius: 15px;
    background: #dbffff;
    display: flex;
    align-items: center;
    gap: 8px;
    font-size: 12px;
}
.find input {
    flex: 1;
    min-width: 0;
}
.tray {
    justify-content: flex-end;
    padding-right: 18px;
    gap: 6px;
    color: #000;
}
.net {
    margin-left: 10px;
}
.clock {
    margin-left: 9px;
    text-align: right;
}
```
FILE: script.js
```javascript
// Straight-line depreciation over 330 months
const COST = 200000;
const EXPENSE = COST / 330;

function saleProceeds(period) {
    if (period === 0) return 195000;
    if (period >= 8 && period <= 10) return 201000;
    if (period <= 22) return 220000;
    if (period === 23) return 190000;
    return 180000;
}

function money(value) {
    if (value === null) return "-";
    const text = "$" + Math.abs(Math.round(value)).toLocaleString("en-US");
    return value < 0 ? "(" + text + ")" : text;
}

function rowValues(period) {
    const used = period * EXPENSE;
    const book = COST - used;
    const sale = saleProceeds(period);
    const gain = sale - book;
    if (period === 33) {
        return [COST, EXPENSE, book, sale, used, 0, null, 0, -0.001];
    }
    const recapture = gain > 0 ? Math.min(used, gain) : null;
    let rest = gain - (recapture || 0);
    if (Math.abs(rest) < 1) rest = null;
    return [COST, period ? EXPENSE : null, book, sale, used || null, recapture, gain, recapture, rest];
}

const body = document.getElementById("cells");
for (let period = 0; period <= 38; period++) {
    const tr = document.createElement("tr");
    const head = document.createElement("th");
    head.textContent = period + 4;
    tr.appendChild(head);

    const first = document.createElement("td");
    first.textContent = period;
    tr.appendChild(first);

    rowValues(period).forEach((value, i) => {
        const td = document.createElement("td");
        td.textContent = money(value);
        if (i === 1 || i === 3 || (i === 0 && period === 0)) td.classList.add("input");
        if (i > 6) td.classList.add("dark");
        if (value < 0) td.classList.add("neg");
        tr.appendChild(td);
    });

    const rest = document.createElement("td");
    rest.colSpan = 10;
    tr.appendChild(rest);
    body.appendChild(tr);
}
```
